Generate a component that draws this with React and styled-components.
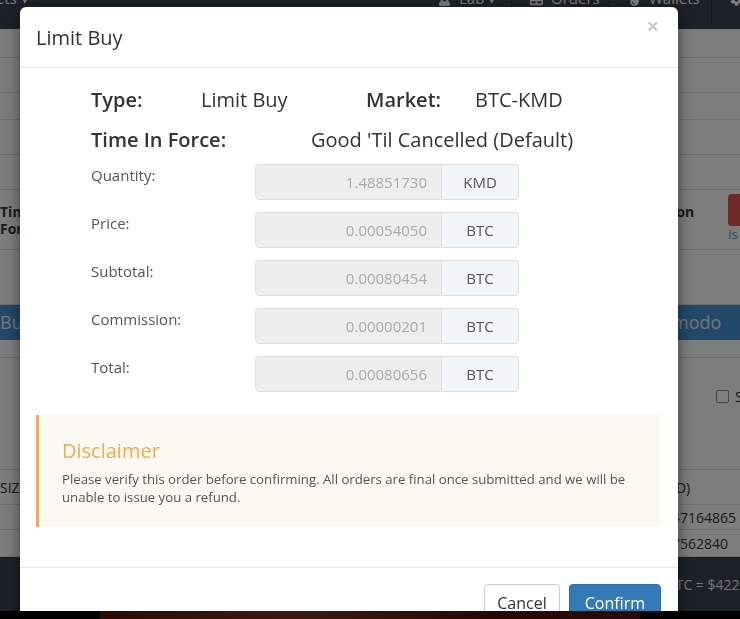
import React from 'react'
import styled, { createGlobalStyle } from 'styled-components'
import { FaFlask, FaTable, FaTint, FaCog } from 'react-icons/fa'

const GlobalStyle = createGlobalStyle`
    html, body {
        margin: 0;
        padding: 0;
        font-family: "Open Sans", "Liberation Sans", sans-serif;
        color: #333;
        overflow: hidden;
    }
    * { box-sizing: border-box; }
`

const rows = [
    { h: 29 },
    { h: 35 },
    { h: 27 },
    { h: 35 },
    { h: 35 },
    { h: 60, left: ['Time', 'Force'], bold: true, right: 'ion', button: true, top: true },
    { h: 55 },
    { h: 35, band: true, left: ['Buy'], right: 'modo' },
    { h: 18 },
    { h: 112, check: true },
    { h: 35, left: ['SIZE'], right: 'ID)', shift: -2 },
    { h: 25, right: '47164865', shift: -6 },
    { h: 27, right: '7562840' },
]

const navItems = [
    { icon: <FaFlask size={13} />, text: 'Lab ▾', w: 92 },
    { icon: <FaTable size={13} />, text: 'Orders', w: 98 },
    { icon: <FaTint size={13} />, text: 'Wallets', w: 102 },
    { icon: <FaCog size={13} />, w: 33, last: true },
]

const fields = [
    { label: 'Quantity:', value: '1.48851730', unit: 'KMD' },
    { label: 'Price:', value: '0.00054050', unit: 'BTC' },
    { label: 'Subtotal:', value: '0.00080454', unit: 'BTC' },
    { label: 'Commission:', value: '0.00000201', unit: 'BTC' },
    { label: 'Total:', value: '0.00080656', unit: 'BTC' },
]

function App() {
    return (
        <>
            <GlobalStyle />
            <Page>
                <Navbar>
                    <NavBrand>Markets ▾</NavBrand>
                    <NavItems>
                        {navItems.map((n, i) => (
                            <NavItem key={i} $w={n.w} $last={n.last}>
                                {n.icon}
                                {n.text}
                            </NavItem>
                        ))}
                    </NavItems>
                </Navbar>
                {rows.map((r, i) => (
                    <Row key={i} $h={r.h} $band={r.band}>
                        <LeftCell $band={r.band} $bold={r.bold}>
                            {r.left && r.left.map((t) => <div key={t}>{t}</div>)}
                        </LeftCell>
                        <RightCell $band={r.band} $shift={r.shift} $top={r.top}>
                            {r.right}
                            {r.button && (
                                <RedStack>
                                    <RedButton />
                                    <BlueLink>is</BlueLink>
                                </RedStack>
                            )}
                            {r.check && (
                                <CheckWrap>
                                    <CheckBox /> Show
                                </CheckWrap>
                            )}
                        </RightCell>
                    </Row>
                ))}
                <PageFooter>
                    <FooterText>1 BTC = $4228.40</FooterText>
                </PageFooter>
            </Page>

            <Backdrop />

            <ModalLayer>
                <Dialog>
                    <Header>
                        <Title>Limit Buy</Title>
                        <Close>×</Close>
                    </Header>
                    <Body>
                        <Summary>
                            <SummaryRow>
                                <Key $w={110}>Type:</Key>
                                <Val $w={165}>Limit Buy</Val>
                                <Key $w={109}>Market:</Key>
                                <Val>BTC-KMD</Val>
                            </SummaryRow>
                            <SummaryRow>
                                <Key $w={220}>Time In Force:</Key>
                                <Val>Good 'Til Cancelled (Default)</Val>
                            </SummaryRow>
                        </Summary>
                        <Form>
                            {fields.map((f) => (
                                <FieldRow key={f.label}>
                                    <FieldLabel>{f.label}</FieldLabel>
                                    <InputGroup>
                                        <Input>{f.value}</Input>
                                        <Addon>{f.unit}</Addon>
                                    </InputGroup>
                                </FieldRow>
                            ))}
                        </Form>
                        <Disclaimer>
                            <DisclaimerTitle>Disclaimer</DisclaimerTitle>
                            <DisclaimerText>
                                Please verify this order before confirming. All orders are final once submitted and we will be unable to issue you a refund.
                            </DisclaimerText>
                        </Disclaimer>
                    </Body>
                    <Footer>
                        <Button>Cancel</Button>
                        <Button $primary>Confirm</Button>
                    </Footer>
                </Dialog>
            </ModalLayer>

            <Taskbar />
        </>
    )
}

export default App

const Page = styled.div`
    width: 740px;
    height: 619px;
    overflow: hidden;
    background: #fbfbfb;
    display: flex;
    flex-direction: column;
`
const Navbar = styled.div`
    height: 29px;
    flex: none;
    background: #3a4250;
    display: flex;
    justify-content: space-between;
    align-items: flex-start;
    color: #f4f4f4;
    font-size: 15px;
    overflow: hidden;
`
const NavBrand = styled.div`
    margin-top: -12px;
    margin-left: -40px;
`
const NavItems = styled.div`
    display: flex;
    height: 23px;
    margin-right: -5px;
`
const NavItem = styled.div`
    width: ${(p) => p.$w}px;
    display: flex;
    align-items: flex-start;
    gap: 8px;
    padding-left: 18px;
    margin-top: -12px;
    height: 35px;
    white-space: nowrap;
    border-right: ${(p) => (p.$last ? 'none' : '1px solid #232830')};
    svg { margin-top: 5px; flex: none; }
`
const Row = styled.div`
    height: ${(p) => p.$h}px;
    flex: none;
    display: flex;
    justify-content: space-between;
    align-items: center;
    background: ${(p) => (p.$band ? '#4590d4' : 'transparent')};
    border-bottom: 1px solid ${(p) => (p.$band ? '#4590d4' : '#dcdcdc')};
`
const LeftCell = styled.div`
    font-size: 14px;
    font-weight: ${(p) => (p.$bold ? 700 : 400)};
    line-height: 17px;
    color: ${(p) => (p.$band ? '#e8eef5' : '#333')};
    ${(p) => p.$band && 'font-size: 18px;'}
`
const RightCell = styled.div`
    width: 68px;
    flex: none;
    display: flex;
    align-items: ${(p) => (p.$top ? 'flex-start' : 'center')};
    align-self: ${(p) => (p.$top ? 'flex-start' : 'auto')};
    padding-top: ${(p) => (p.$top ? '12px' : '0')};
    margin-left: ${(p) => p.$shift || 0}px;
    white-space: nowrap;
    font-size: ${(p) => (p.$band ? '18px' : '14px')};
    font-weight: ${(p) => (p.$top ? 700 : 400)};
    color: ${(p) => (p.$band ? '#e8eef5' : '#333')};
`
const RedStack = styled.div`
    display: flex;
    flex-direction: column;
    align-items: flex-start;
    margin-left: 34px;
    margin-top: -8px;
`
const RedButton = styled.div`
    width: 30px;
    height: 32px;
    background: #d9534f;
    border-radius: 4px;
`
const BlueLink = styled.span`
    color: #4a90d0;
    font-size: 13px;
    font-weight: 400;
    line-height: 16px;
`
const CheckWrap = styled.div`
    display: flex;
    align-items: center;
    gap: 6px;
    margin-left: 44px;
    margin-top: -34px;
`
const CheckBox = styled.span`
    width: 13px;
    height: 13px;
    border: 1px solid #888;
    border-radius: 2px;
    background: #fff;
`
const PageFooter = styled.div`
    flex: 1;
    background: #3a4250;
    display: flex;
    justify-content: flex-end;
    padding-top: 18px;
`
const FooterText = styled.div`
    width: 85px;
    flex: none;
    color: #e8e8e8;
    font-size: 14px;
    white-space: nowrap;
`
const Backdrop = styled.div`
    position: fixed;
    inset: 0;
    background: rgba(0, 0, 0, 0.5);
    z-index: 10;
`
const ModalLayer = styled.div`
    position: fixed;
    inset: 0;
    z-index: 20;
    padding: 7px 0 0 20px;
`
const Dialog = styled.div`
    width: 658px;
    background: #fff;
    border-radius: 6px;
    box-shadow: 0 5px 15px rgba(0, 0, 0, 0.5);
`
const Header = styled.div`
    display: flex;
    justify-content: space-between;
    align-items: flex-start;
    padding: 15px 19px 14px 16px;
    border-bottom: 1px solid #e5e5e5;
`
const Title = styled.div`
    font-size: 20px;
    line-height: 31px;
    color: #333;
`
const Close = styled.div`
    font-size: 22px;
    line-height: 1;
    font-weight: 700;
    color: #c9c9c9;
    margin-top: -8px;
`
const Body = styled.div`
    padding: 18px 17px 16px 16px;
`
const Summary = styled.div`
    padding-left: 55px;
    display: flex;
    flex-direction: column;
    gap: 12px;
`
const SummaryRow = styled.div`
    display: flex;
    font-size: 20px;
    line-height: 28px;
`
const Key = styled.div`
    width: ${(p) => p.$w}px;
    font-weight: 600;
    color: #333;
`
const Val = styled.div`
    width: ${(p) => (p.$w ? `${p.$w}px` : 'auto')};
    color: #333;
`
const Form = styled.div`
    padding-left: 55px;
    margin-top: 10px;
    display: flex;
    flex-direction: column;
    gap: 12px;
`
const FieldRow = styled.div`
    display: grid;
    grid-template-columns: 164px 264px;
    align-items: start;
`
const FieldLabel = styled.div`
    font-size: 15px;
    line-height: 22px;
    color: #555;
`
const InputGroup = styled.div`
    display: flex;
    height: 36px;
    font-size: 15px;
`
const Input = styled.div`
    width: 187px;
    background: #eee;
    border: 1px solid #ddd;
    border-radius: 4px 0 0 4px;
    color: #aaa;
    text-align: right;
    padding: 0 14px;
    line-height: 34px;
`
const Addon = styled.div`
    flex: 1;
    background: #f3f6f9;
    border: 1px solid #ddd;
    border-left: none;
    border-radius: 0 4px 4px 0;
    color: #555;
    text-align: center;
    line-height: 34px;
`
const Disclaimer = styled.div`
    margin-top: 23px;
    margin-bottom: 24px;
    background: #fcf8f2;
    border-left: 3px solid #f0ad4e;
    padding: 22px 22px 21px 23px;
`
const DisclaimerTitle = styled.div`
    font-size: 20px;
    line-height: 28px;
    color: #f0ad4e;
`
const DisclaimerText = styled.div`
    margin-top: 5px;
    font-size: 13.2px;
    line-height: 18px;
    color: #555;
`
const Footer = styled.div`
    display: flex;
    justify-content: flex-end;
    gap: 9px;
    padding: 16px 17px 16px 16px;
    border-top: 1px solid #e5e5e5;
`
const Button = styled.button`
    font-family: "Open Sans", "Liberation Sans", sans-serif;
    font-size: 16px;
    line-height: 24px;
    padding: ${(p) => (p.$primary ? '6px 15px' : '6px 12px')};
    border-radius: 4px;
    border: 1px solid ${(p) => (p.$primary ? '#2e6da4' : '#ccc')};
    background: ${(p) => (p.$primary ? '#337ab7' : '#fff')};
    color: ${(p) => (p.$primary ? '#fff' : '#333')};
`
const Taskbar = styled.div`
    position: fixed;
    left: 0;
    right: 0;
    bottom: 0;
    height: 8px;
    z-index: 30;
    background: linear-gradient(90deg, #000 0 100px, #2a0a06 100px, #3a1a10 300px, #240806 500px, #2a0a06 640px, #000 640px);
`
